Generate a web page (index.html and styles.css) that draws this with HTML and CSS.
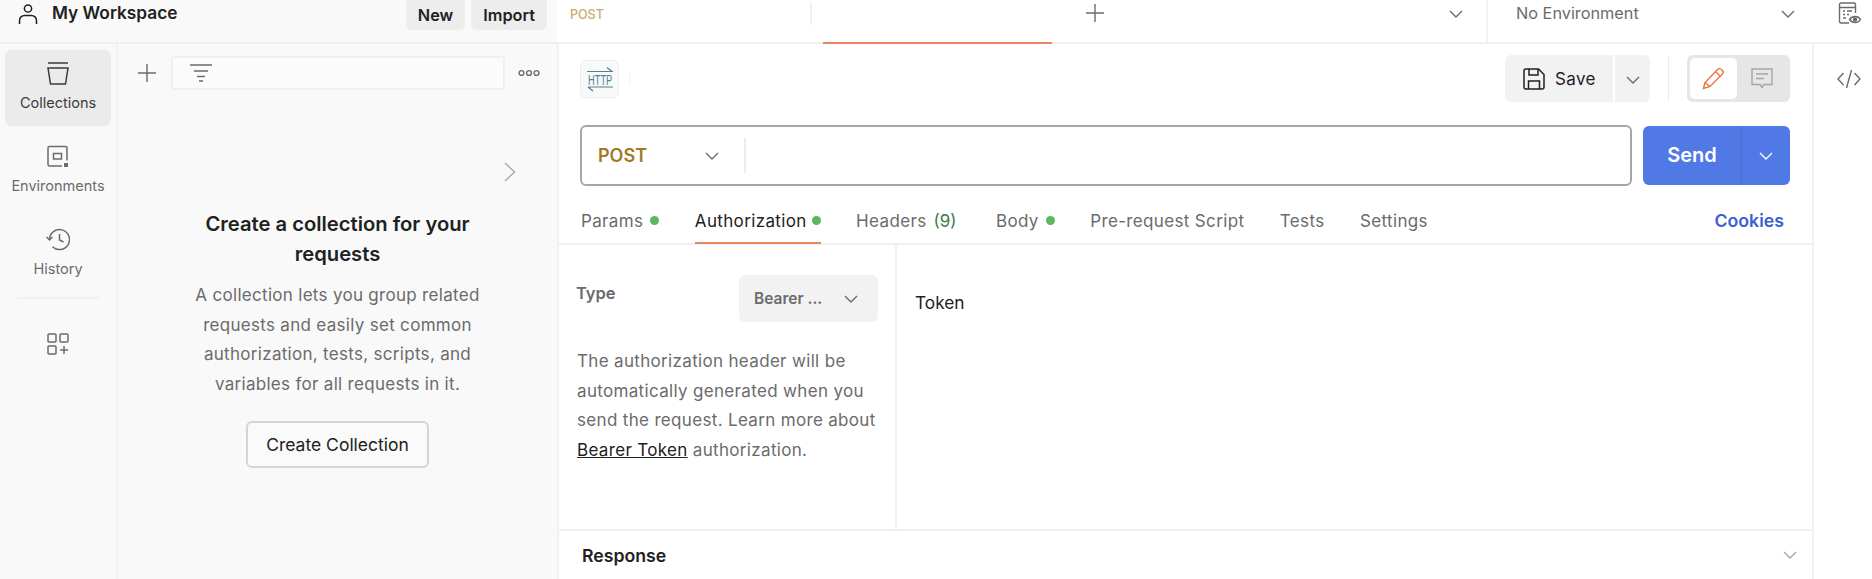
FILE: index.html
```html
<!DOCTYPE html>
<html lang="en">
<head>
    <meta charset="UTF-8">
    <meta name="viewport" content="width=device-width, initial-scale=1.0">
    <title>My Workspace</title>
    <link rel="stylesheet" href="styles.css">
</head>
<body>
    <header class="topbar">
        <div class="workspace">
            <svg class="icon-user" width="20" height="22" viewBox="0 0 20 22" fill="none" stroke="#212121" stroke-width="1.5">
                <circle cx="10" cy="5.5" r="3.6"/>
                <path d="M1.5 21v-3.500c0-3 2.500-5 5-5h7c2.500 0 5 2 5 5V21"/>
            </svg>
            <span class="workspace-name">My Workspace</span>
            <button class="top-btn new-btn">New</button>
            <button class="top-btn">Import</button>
        </div>
        <div class="tabstrip">
            <div class="tab-first"><span class="tab-method">POST</span></div>
            <div class="tab-active"></div>
            <svg class="tab-plus" width="20" height="20" viewBox="0 0 20 20" stroke="#6b6b6b" stroke-width="1.4"><path d="M10 1v18M1 10h18"/></svg>
            <svg class="chev tab-chev" width="14" height="8" viewBox="0 0 14 8"><path d="M1 1l6 6 6-6"/></svg>
        </div>
        <div class="env">
            <span>No Environment</span>
            <svg class="chev" width="14" height="8" viewBox="0 0 14 8"><path d="M1 1l6 6 6-6"/></svg>
        </div>
        <div class="top-right">
            <svg width="24" height="23" viewBox="0 0 24 23" fill="none" stroke="#6b6b6b" stroke-width="1.4">
                <path d="M11 21H3a1.500 1.500 0 0 1-1.500-1.500V2.500A1.500 1.500 0 0 1 3 1h13a1.500 1.500 0 0 1 1.500 1.500V11"/>
                <path d="M1.500 5.500h16M5 9h2M9 9h5M5 12.500h2M9 12.500h2M5 16h3"/>
                <path d="M11.500 17.500c2.800-4 8.700-4 11 0-2.300 4-8.200 4-11 0z"/>
                <circle cx="17" cy="17.500" r="1.500" fill="#6b6b6b"/>
            </svg>
        </div>
    </header>

    <div class="layout">
        <nav class="rail">
            <a class="rail-item active">
                <svg width="22" height="23" viewBox="0 0 22 23" fill="none" stroke="#3b3b3b" stroke-width="1.5">
                    <path d="M1 1h20M1 6h20l-2.500 16h-15z"/>
                </svg>
                <span>Collections</span>
            </a>
            <a class="rail-item">
                <svg width="22" height="22" viewBox="0 0 22 22" fill="none" stroke="#6b6b6b" stroke-width="1.5">
                    <path d="M15 20.500H2.500a1.500 1.500 0 0 1-1.500-1.500V2.500A1.500 1.500 0 0 1 2.500 1h16A1.500 1.500 0 0 1 20 2.500V15"/>
                    <rect x="6.500" y="8" width="8" height="5.500"/>
                    <rect x="17" y="17.500" width="4" height="4" fill="#6b6b6b" stroke="none"/>
                </svg>
                <span>Environments</span>
            </a>
            <a class="rail-item">
                <svg width="24" height="22" viewBox="0 0 24 22" fill="none" stroke="#6b6b6b" stroke-width="1.5">
                    <path d="M3.500 11a10 10 0 1 1 3 7.200"/>
                    <path d="M0.500 8.500l3 3 3-3M13.500 5.500V11.500l4 2"/>
                </svg>
                <span>History</span>
            </a>
            <div class="rail-sep"></div>
            <svg class="rail-add" width="22" height="22" viewBox="0 0 22 22" fill="none" stroke="#6b6b6b" stroke-width="1.5">
                <rect x="1" y="1" width="8" height="8" rx="1"/>
                <rect x="13" y="1" width="8" height="8" rx="1"/>
                <rect x="1" y="13" width="8" height="8" rx="1"/>
                <path d="M17 13v8M13 17h8"/>
            </svg>
        </nav>

        <aside class="sidepanel">
            <div class="side-tools">
                <svg width="18" height="18" viewBox="0 0 18 18" stroke="#6b6b6b" stroke-width="1.4"><path d="M9 0v18M0 9h18"/></svg>
                <div class="filter">
                    <svg width="22" height="18" viewBox="0 0 22 18" stroke="#6b6b6b" stroke-width="1.4"><path d="M0 1h22M4 7h14M7 12.500h8M9 17h4"/></svg>
                </div>
                <svg width="22" height="8" viewBox="0 0 22 8" fill="none" stroke="#6b6b6b" stroke-width="1.4">
                    <circle cx="3.500" cy="4" r="2.400"/><circle cx="11" cy="4" r="2.400"/><circle cx="18.500" cy="4" r="2.400"/>
                </svg>
            </div>
            <div class="side-chev">
                <svg width="12" height="20" viewBox="0 0 12 20" fill="none" stroke="#a6a6a6" stroke-width="1.4"><path d="M1 1l9.500 9L1 19"/></svg>
            </div>
            <div class="empty">
                <h2>Create a collection for your requests</h2>
                <p>A collection lets you group related requests and easily set common authorization, tests, scripts, and variables for all requests in it.</p>
                <button class="create-btn">Create Collection</button>
            </div>
        </aside>

        <main class="main">
            <div class="req-head">
                <div class="http-icon">
                    <svg width="28" height="26" viewBox="0 0 28 26" fill="none" stroke="#4f8296" stroke-width="1.200">
                        <path d="M1 5.500h25L21 1.500M2 21h25M2 21l5 4"/>
                        <text transform="translate(2 18.500) scale(0.62 1)" class="http-text">HTTP</text>
                    </svg>
                </div>
                <div class="name-sep"></div>
                <div class="save-group">
                    <button class="save-btn">
                        <svg width="22" height="22" viewBox="0 0 22 22" fill="none" stroke="#212121" stroke-width="1.500">
                            <path d="M1 3a2 2 0 0 1 2-2h12.500L21 6.500V19a2 2 0 0 1-2 2H3a2 2 0 0 1-2-2z"/>
                            <path d="M6 1v6h9V1M5.500 21v-8h11v8"/>
                        </svg>
                        <span>Save</span>
                    </button>
                    <button class="save-more">
                        <svg class="chev" width="14" height="8" viewBox="0 0 14 8"><path d="M1 1l6 6 6-6"/></svg>
                    </button>
                </div>
                <div class="head-sep"></div>
                <div class="mode">
                    <span class="mode-on">
                        <svg width="23" height="23" viewBox="0 0 23 23" fill="none" stroke="#e8743f" stroke-width="1.400">
                            <path d="M1.500 21.500l1.500-6L15.500 2.500c1-1 3-1 4.500.5s1.500 3 .5 4L8 19.500z"/>
                            <path d="M13.500 4.500l5 5M3 15.500l5 4"/>
                        </svg>
                    </span>
                    <span class="mode-off">
                        <svg width="22" height="21" viewBox="0 0 22 21" fill="none" stroke="#a6a6a6" stroke-width="1.400">
                            <path d="M1 1h20v15.500h-8L11 19.500 9 16.500H1z"/>
                            <path d="M5 6h12M5 10.500h8"/>
                        </svg>
                    </span>
                </div>
            </div>

            <div class="url-row">
                <div class="url-box">
                    <span class="url-method">POST</span>
                    <svg class="chev" width="14" height="8" viewBox="0 0 14 8"><path d="M1 1l6 6 6-6"/></svg>
                    <div class="url-sep"></div>
                </div>
                <div class="send">
                    <span class="send-label">Send</span>
                    <span class="send-more">
                        <svg class="chev chev-white" width="14" height="8" viewBox="0 0 14 8"><path d="M1 1l6 6 6-6"/></svg>
                    </span>
                </div>
            </div>

            <div class="req-tabs">
                <span class="req-tab">Params<i class="dot"></i></span>
                <span class="req-tab current">Authorization<i class="dot"></i></span>
                <span class="req-tab headers">Headers<em>(9)</em></span>
                <span class="req-tab">Body<i class="dot"></i></span>
                <span class="req-tab">Pre-request Script</span>
                <span class="req-tab">Tests</span>
                <span class="req-tab">Settings</span>
                <span class="cookies">Cookies</span>
            </div>

            <div class="auth">
                <div class="auth-left">
                    <div class="auth-type">
                        <span class="type-label">Type</span>
                        <div class="type-select">
                            <span>Bearer ...</span>
                            <svg class="chev" width="14" height="8" viewBox="0 0 14 8"><path d="M1 1l6 6 6-6"/></svg>
                        </div>
                    </div>
                    <p class="auth-note">The authorization header will be automatically generated when you send the request. Learn more about <a>Bearer Token</a> authorization.</p>
                </div>
                <div class="auth-right">Token</div>
            </div>

            <div class="response">
                <span>Response</span>
                <svg class="chev chev-light" width="14" height="8" viewBox="0 0 14 8"><path d="M1 1l6 6 6-6"/></svg>
            </div>
        </main>

        <div class="right-rail">
            <svg width="24" height="20" viewBox="0 0 24 20" fill="none" stroke="#6b6b6b" stroke-width="1.400"><path d="M6.500 4L1 10l5.500 6M17.500 4L23 10l-5.500 6M14.500 1l-5 18"/></svg>
        </div>
    </div>
</body>
</html>
```

FILE: styles.css
```css
* {
    box-sizing: border-box;
}
html, body {
    margin: 0;
    height: 579px;
    overflow: hidden;
}
body {
    font-family: Inter, "Open Sans", sans-serif;
    font-size: 16px;
    color: #212121;
    background: #fff;
}
button {
    font-family: inherit;
    border: none;
    cursor: pointer;
}
.chev {
    fill: none;
    stroke: #6b6b6b;
    stroke-width: 1.4;
    flex: none;
}
.chev-white {
    stroke: #fff;
}
.chev-light {
    stroke: #a6a6a6;
}

/* top bar */
.topbar {
    display: flex;
    height: 44px;
    border-bottom: 2px solid #f0f0f0;
}
.workspace {
    width: 557px;
    display: flex;
    align-items: flex-start;
    padding: 3px 10px 0 18px;
    background: #f9f9f9;
}
.workspace-name {
    margin: -3px auto 0 14px;
    line-height: 26px;
    font-weight: 600;
    font-size: 17.300px;
}
.top-btn {
    height: 30px;
    margin-top: -3px;
    padding: 0 12px;
    font-size: 16.300px;
    font-weight: 600;
    border-radius: 0 0 5px 5px;
    background: #ededed;
    color: #212121;
}
.new-btn {
    margin-right: 6px;
}
.tabstrip {
    width: 929px;
    display: flex;
    align-items: flex-start;
    padding-left: 1px;
}
.tab-first {
    width: 254px;
    height: 23px;
    margin-top: 2px;
    padding-left: 12px;
    line-height: 22px;
    border-right: 2px solid #f2f2f2;
}
.tab-method {
    font-size: 12.500px;
    font-weight: 500;
    color: #c9ab6e;
}
.tab-active {
    width: 229px;
    height: 44px;
    margin-left: 11px;
    border-bottom: 2px solid #e9855f;
}
.tab-plus {
    margin: 3px 0 0 33px;
}
.tab-chev {
    margin: 10px 0 0 344px;
}
.env {
    width: 326px;
    height: 42px;
    display: flex;
    align-items: flex-start;
    justify-content: space-between;
    padding: 0 17px 0 28px;
    border-left: 2px solid #f2f2f2;
    line-height: 26px;
    font-size: 16.300px;
    color: #6b6b6b;
}
.env .chev {
    margin-top: 10px;
}
.top-right {
    flex: 1;
    padding: 2px 0 0 26px;
}

.layout {
    display: flex;
    height: 535px;
}

/* left rail */
.rail {
    width: 118px;
    flex: none;
    display: flex;
    flex-direction: column;
    align-items: center;
    padding-top: 6px;
    background: #f9f9f9;
    border-right: 2px solid #f2f2f2;
}
.rail-item {
    width: 106px;
    height: 76px;
    margin-bottom: 7px;
    display: flex;
    flex-direction: column;
    align-items: center;
    padding-top: 12px;
    border-radius: 6px;
    font-size: 14.500px;
    color: #6b6b6b;
}
.rail-item svg {
    height: 23px;
    flex: none;
}
.rail-item span {
    margin-top: 8px;
    line-height: 20px;
}
.rail-item.active {
    background: #ebebeb;
    color: #3b3b3b;
}
.rail-sep {
    width: 82px;
    height: 2px;
    margin-top: -2px;
    background: #f0f0f0;
}
.rail-add {
    margin-top: 34px;
}

/* collections panel */
.sidepanel {
    width: 439px;
    flex: none;
    background: #f9f9f9;
}
.side-tools {
    display: flex;
    align-items: center;
    height: 34px;
    margin-top: 12px;
    padding-left: 20px;
}
.filter {
    width: 334px;
    height: 34px;
    margin: 0 13px 0 15px;
    padding: 8px 17px;
    background: #fbfbfb;
    border: 2px solid #efefef;
    border-radius: 3px;
}
.filter svg {
    display: block;
    margin-top: -2px;
}
.side-chev {
    display: flex;
    justify-content: flex-end;
    padding: 72px 41px 0 0;
}
.empty {
    display: flex;
    flex-direction: column;
    align-items: center;
    margin-top: 27px;
    text-align: center;
}
.empty h2 {
    max-width: 300px;
    margin: 0;
    font-size: 20.200px;
    line-height: 29.500px;
    font-weight: 600;
}
.empty p {
    max-width: 310px;
    margin: 13px 0 0;
    line-height: 29.500px;
    font-size: 17px;
    letter-spacing: 0.3px;
    color: #6b6b6b;
}
.create-btn {
    width: 183px;
    height: 47px;
    margin-top: 22px;
    font-size: 17.500px;
    color: #212121;
    background: #fafafa;
    border: 2px solid #d4d4d4;
    border-radius: 6px;
}

/* request area */
.main {
    width: 1255px;
    flex: none;
    border-left: 2px solid #f2f2f2;
    display: flex;
    flex-direction: column;
}
.req-head {
    display: flex;
    align-items: center;
    height: 47px;
    margin-top: 11px;
    padding: 0 22px 0 21px;
}
.http-icon {
    width: 39px;
    height: 38px;
    display: flex;
    align-items: center;
    justify-content: center;
    background: #f9f9f9;
    border: 1px solid #ededed;
    border-radius: 6px;
}
.http-text {
    font-size: 15px;
    fill: #4f8296;
    stroke: none;
    font-family: "Liberation Sans", sans-serif;
}
.name-sep {
    width: 1px;
    height: 13px;
    margin: 0 auto 0 10px;
    background: #fdf0dc;
}
.save-group {
    display: flex;
    height: 47px;
}
.save-btn {
    width: 108px;
    display: flex;
    align-items: center;
    padding: 0 0 0 18px;
    font-size: 17px;
    letter-spacing: 0.35px;
    color: #212121;
    background: #f2f2f2;
    border-radius: 6px 0 0 6px;
}
.save-btn span {
    margin-left: 10px;
}
.save-more {
    width: 35px;
    margin-left: 2px;
    background: #f2f2f2;
    border-radius: 0 6px 6px 0;
}
.head-sep {
    width: 1px;
    height: 47px;
    margin: 0 18px;
    background: #ececec;
}
.mode {
    width: 103px;
    height: 47px;
    display: flex;
    align-items: center;
    padding: 3px;
    background: #e6e6e6;
    border-radius: 6px;
}
.mode span {
    display: flex;
    align-items: center;
    justify-content: center;
    height: 41px;
}
.mode-on {
    width: 47px;
    background: #fff;
    border-radius: 5px;
}
.mode-off {
    flex: 1;
}

.url-row {
    display: flex;
    height: 61px;
    margin-top: 23px;
    padding: 0 20px 0 21px;
}
.url-box {
    width: 1052px;
    display: flex;
    align-items: center;
    padding-left: 16px;
    border: 2px solid #a6a6a6;
    border-radius: 6px;
}
.url-method {
    width: 107px;
    font-size: 18px;
    font-weight: 600;
    color: #a07a27;
}
.url-sep {
    width: 2px;
    height: 35px;
    margin-left: 25px;
    background: #ececec;
}
.send {
    width: 147px;
    height: 59px;
    margin: 1px 0 0 11px;
    display: flex;
    color: #fff;
    background: #5079e6;
    border-radius: 6px;
}
.send-label {
    width: 99px;
    line-height: 59px;
    text-align: center;
    font-size: 20px;
    font-weight: 600;
    border-right: 1px solid #4a6fd6;
}
.send-more {
    flex: 1;
    display: flex;
    align-items: center;
    justify-content: center;
}

.req-tabs {
    display: flex;
    gap: 35.500px;
    height: 59px;
    padding: 0 22px 0 22px;
    border-bottom: 2px solid #f0f0f0;
    color: #6b6b6b;
}
.req-tab {
    height: 58px;
    display: flex;
    align-items: center;
    padding-top: 13px;
    font-size: 17px;
    letter-spacing: 0.35px;
    border-bottom: 2px solid transparent;
}
.req-tab.current {
    color: #212121;
    border-bottom-color: #e9855f;
}
.req-tab.current .dot {
    margin-left: 5px;
}
.req-tab em {
    margin-left: 7px;
    font-style: normal;
    letter-spacing: 0;
    color: #3d7a45;
}
.headers {
    padding-right: 4px;
}
.dot {
    width: 9px;
    height: 9px;
    margin-left: 7px;
    border-radius: 50%;
    background: #5cb85c;
}
.cookies {
    margin-left: auto;
    margin-right: 6px;
    padding-top: 24px;
    font-size: 17.700px;
    font-weight: 600;
    color: #3d5fd0;
}

.auth {
    display: flex;
    height: 286px;
    border-bottom: 2px solid #f0f0f0;
}
.auth-left {
    width: 338px;
    padding: 30px 18px 0 18px;
    border-right: 2px solid #f2f2f2;
}
.auth-type {
    display: flex;
    justify-content: space-between;
}
.type-label {
    margin: 4px 0 0 -1px;
    line-height: 28px;
    font-weight: 600;
    color: #6b6b6b;
    font-size: 16.500px;
}
.type-select {
    width: 139px;
    height: 47px;
    display: flex;
    align-items: center;
    justify-content: space-between;
    padding: 0 20px 0 15px;
    margin-right: -1px;
    background: #f2f2f2;
    border-radius: 6px;
    font-size: 15.500px;
    font-weight: 600;
    color: #6b6b6b;
}
.auth-note {
    margin: 25px 0 0;
    line-height: 29.500px;
    font-size: 17px;
    letter-spacing: 0.33px;
    color: #6b6b6b;
}
.auth-note a {
    color: #212121;
    text-decoration: underline;
}
.auth-right {
    padding: 47px 0 0 18px;
    font-size: 17.300px;
}
.response {
    flex: 1;
    display: flex;
    align-items: center;
    justify-content: space-between;
    padding: 0 15px 0 23px;
    font-size: 17.700px;
    font-weight: 600;
}

.right-rail {
    flex: 1;
    display: flex;
    justify-content: center;
    padding: 25px 0 0 12px;
    border-left: 2px solid #f2f2f2;
}
.right-rail svg {
    display: block;
}
```
